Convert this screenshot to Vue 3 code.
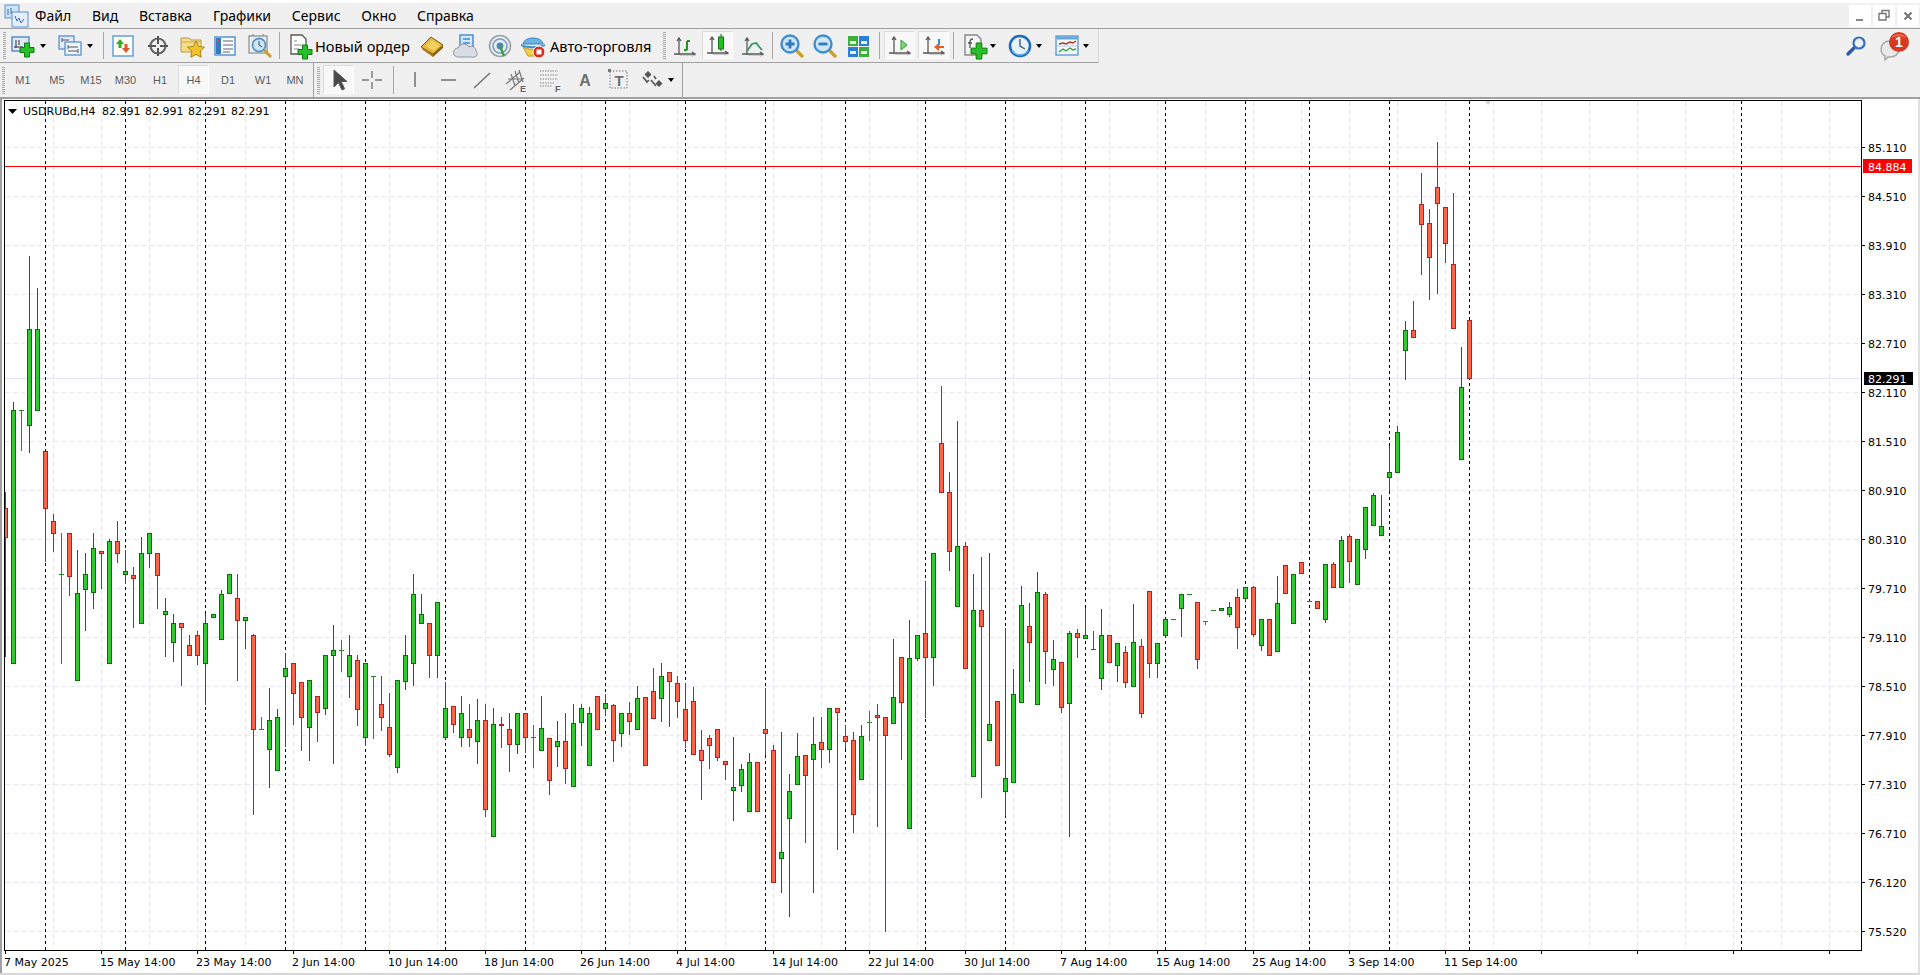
<script setup>
const plus = (x, y, a = 7, b = 2.5) =>
  `<path d="M${x - b} ${y - a}h${b * 2}v${a - b}h${a - b}v${b * 2}h${b - a}v${a - b}h${-b * 2}v${b - a}h${b - a}v${-b * 2}h${a - b}z" fill="#28c028" stroke="#0d7a0d"/>`
const axes = `<path d="M8 6V23M3 22H24M6 9l2-3 2 3M21 20l3 2-3 2" fill="none" stroke="#5a5a5a" stroke-width="1.3"/><path d="M9 23.5H25" stroke="#ccc"/>`
const lens = (mark) =>
  `<path d="M18 18l6 6" stroke="#c9a030" stroke-width="3.4" stroke-linecap="round"/><circle cx="12" cy="12" r="8.5" fill="#cfe6f8" stroke="#3f8fd0" stroke-width="2.4"/>${mark}`
const icons = {
  logo: `<rect x="2" y="1" width="14" height="13" fill="#cfe2f6" stroke="#5b8fd0"/><rect x="9" y="8" width="16" height="15" fill="#e4effa" stroke="#5b8fd0"/><path d="M5 5v6M8 4v6M12 12l2 5 2-3 2 5 3-4" stroke="#3a6eb0" fill="none"/>`,
  newchart: `<rect x="3" y="5" width="17" height="14" fill="#dfeafa" stroke="#4d86c2" stroke-width="1.4"/><path d="M7 8v8M5 15h9M10 8v5" stroke="#333" fill="none"/>${plus(18, 18)}`,
  profile: `<rect x="3" y="4" width="15" height="13" fill="#dfeafa" stroke="#5b8fc8" stroke-width="1.3"/><rect x="9" y="10" width="16" height="13" fill="#eef4fb" stroke="#5b8fc8" stroke-width="1.3"/><path d="M6 8h7M6 6v4M12 15h10M12 19h10M12 13v4M22 17v4" stroke="#555" fill="none"/>`,
  market: `<rect x="4" y="4" width="20" height="20" fill="#fffdf5" stroke="#6ba6dc" stroke-width="1.6"/><path d="M11 7l-4 5h2.5v4h3v-4H15z" fill="#2eae2e"/><path d="M17 21l4-5h-2.5v-4h-3v4H13z" fill="#e0552e"/>`,
  cross: `<circle cx="14" cy="14" r="7.5" fill="none" stroke="#666" stroke-width="2.2"/><path d="M14 4v8M14 16v8M4 14h8M16 14h8" stroke="#555" stroke-width="2"/>`,
  folder: `<path d="M3 6h8l2 2h10v12H3z" fill="#f6dd8a" stroke="#b89a40"/><path d="M3 10h20" stroke="#caa94c"/><path d="M18 9l2.6 5.4 5.9.8-4.3 4.1 1 5.9-5.2-2.8-5.2 2.8 1-5.9L9.5 15.2l5.9-.8z" fill="#f2c230" stroke="#a88818"/>`,
  list: `<rect x="4" y="5" width="20" height="18" fill="#f8fbff" stroke="#5e9cd8" stroke-width="1.6"/><rect x="5" y="6" width="5" height="16" fill="#3a78c0"/><path d="M12 9h10M12 13h10M12 17h10M12 20h7" stroke="#666"/><path d="M7 8v2" stroke="#e04830" stroke-width="2"/>`,
  magclock: `<rect x="3" y="4" width="18" height="17" fill="#eee" stroke="#999" stroke-width="1.4"/><path d="M7 4v-2M17 4v-2" stroke="#777"/><path d="M18 18l7 7" stroke="#c9a030" stroke-width="3"/><circle cx="13" cy="13" r="6.5" fill="#cfe6f8" stroke="#5a96cc" stroke-width="1.8"/><path d="M13 9v4l3 2" stroke="#345" fill="none"/>`,
  order: `<path d="M5 3h11l4 4v15H5z" fill="#fff" stroke="#555" stroke-width="1.3"/><path d="M8 9h3M8 13h8M8 17h5" stroke="#888"/>${plus(19, 20, 7, 2.5)}`,
  gold: `<path d="M3 15L13 5l12 8-10 9z" fill="#e6b640" stroke="#7a5a14"/><path d="M3 15l2 3 10 7v-3z" fill="#a87a1e"/><path d="M15 25l10-9v-3l-10 9z" fill="#8a6414"/><path d="M8 14l6-6 8 5-6 6z" fill="#f4d060"/>`,
  cloud: `<rect x="8" y="3" width="13" height="14" fill="#d6e8fb" stroke="#3f87d4" stroke-width="1.4"/><path d="M11 7h7M11 11h7" stroke="#3f87d4" stroke-width="1.4"/><path d="M6 25a4.5 4.5 0 0 1 0-9 6 6 0 0 1 11-1 4.5 4.5 0 0 1 7 4 3.5 3.5 0 0 1-1 6z" fill="#d8dde4" stroke="#8c97a4"/>`,
  radar: `<circle cx="14" cy="14" r="10.5" fill="#e9edf0" stroke="#9aa3aa" stroke-width="1.6"/><circle cx="14" cy="14" r="7" fill="none" stroke="#7a9ec0" stroke-width="1.6"/><circle cx="14" cy="14" r="3.4" fill="#4a86c0"/><path d="M14 14l4 10" stroke="#3aa03a" stroke-width="2.4"/>`,
  auto: `<path d="M4 12c1-8 19-8 20 0z" fill="#68b6e8" stroke="#3a80b8"/><path d="M2 12c6 3 18 3 24 0v2c-6 3-18 3-24 0z" fill="#3a90d0"/><path d="M4 15c6 3 14 3 18 1l-1 8H9z" fill="#f3cf48" stroke="#b99a28"/><circle cx="20" cy="20" r="6" fill="#d83020" stroke="#fff"/><rect x="17.5" y="17.5" width="5" height="5" fill="#fff"/>`,
  bars: `${axes}<path d="M16 18V9M13 18h3M16 9h3" stroke="#179a17" stroke-width="2" fill="none"/>`,
  candle: `${axes}<path d="M17 3v17" stroke="#333"/><rect x="14.5" y="6" width="5" height="12" fill="#22c022" stroke="#0d7a0d"/>`,
  line: `${axes}<path d="M8 19l5-7 4-1 6 7" stroke="#2d9a5e" stroke-width="1.8" fill="none"/>`,
  zin: lens(`<path d="M12 7.5v9M7.5 12h9" stroke="#2e78bc" stroke-width="2.8"/>`),
  zout: lens(`<path d="M7.5 12h9" stroke="#2e78bc" stroke-width="2.8"/>`),
  tile: `<rect x="3" y="4" width="10" height="10" fill="#3cae3c"/><rect x="14" y="4" width="10" height="10" fill="#2c7ed6"/><rect x="3" y="15" width="10" height="10" fill="#2c7ed6"/><rect x="14" y="15" width="10" height="10" fill="#3cae3c"/><path d="M5 9h6v3H5zM16 9h6v3h-6zM5 19h6v3H5zM16 19h6v3h-6z" fill="#e6f2e6"/>`,
  scroll: `${axes}<path d="M15 9l6 5-6 5z" fill="#7ad87a" stroke="#2aa02a"/>`,
  shift: `${axes}<path d="M14 16l5-4v3h5v2h-5v3z" fill="#ea5a20"/><path d="M19 8v6" stroke="#3a8ac8" stroke-width="2"/>`,
  addind: `<path d="M4 3h12l4 4v16H4z" fill="#f4f4f4" stroke="#888" stroke-width="1.4"/><path d="M9 16V10c0-2 1-3 3-3M7 11h4" stroke="#555" fill="none" stroke-width="1.3"/>${plus(18, 19, 8, 2.8)}`,
  clock: `<circle cx="14" cy="14" r="10" fill="#e8f2fa" stroke="#1a6cc0" stroke-width="2.6"/><path d="M14 7v7l5 3" stroke="#4a5a6a" fill="none" stroke-width="1.4"/><path d="M6 18a9 9 0 0 0 16 0" stroke="#6aaee8" fill="none" stroke-width="1.6"/>`,
  tmpl: `<rect x="3" y="4" width="22" height="19" fill="#f4f8fc" stroke="#5e9cd8" stroke-width="1.4"/><rect x="3.5" y="4.5" width="21" height="3" fill="#6aa6de"/><path d="M4 14h20" stroke="#b8cce0"/><path d="M6 12l4-1 3 1 4-2 3 1 3-2" stroke="#b03a20" fill="none" stroke-width="1.4"/><path d="M6 20l4-3 3 2 4-3 3 2 3-1" stroke="#3aa03a" fill="none" stroke-width="1.4"/>`,
  arrow: `<path d="M9 4v17l4.5-4.5 3.5 7.5 2.6-1.2-3.4-7.3H22z" fill="#4a4a4a" stroke="#555"/>`,
  thin: `<path d="M14 5v7M14 16v7M4 14h7M17 14h7" stroke="#777" stroke-width="1.4"/>`,
  vline: `<path d="M14 6v15" stroke="#777" stroke-width="1.6"/>`,
  hline: `<path d="M6 14h15" stroke="#777" stroke-width="1.6"/>`,
  trend: `<path d="M5 22L21 7" stroke="#777" stroke-width="1.6"/>`,
  chan: `<path d="M3 18L17 6M7 24L21 12M8 8l4 12M12 5l4 12M16 4l4 12M5 13h15" stroke="#777" stroke-width="1.2" fill="none"/><text x="17" y="26" font-family="Liberation Sans" font-size="9" font-weight="700" fill="#666">E</text>`,
  fibo: `<path d="M3 5h18M3 9h18M3 13h18M3 17h14M3 20h12" stroke="#888" stroke-dasharray="1.5 1" fill="none"/><text x="18" y="26" font-family="Liberation Sans" font-size="9" font-weight="700" fill="#666">F</text>`,
  atext: `<text x="14" y="20" text-anchor="middle" font-family="Liberation Sans" font-size="16" font-weight="700" fill="#707070">A</text>`,
  ttext: `<rect x="5" y="5" width="17" height="17" fill="none" stroke="#777" stroke-dasharray="1.5 1.5"/><rect x="3" y="3" width="3" height="3" fill="#777"/><text x="14" y="20" text-anchor="middle" font-family="Liberation Sans" font-size="15" font-weight="700" fill="#707070">T</text>`,
  marks: `<path d="M9 5l3.5 3.5L9 12 5.5 8.5zM20 14l3.5 3.5L20 21l-3.5-3.5z" fill="#555"/><path d="M4 11l4 5 2-2M12 14l5 6M15 10l2 3" stroke="#555" stroke-width="1.6" fill="none"/>`,
  search: `<path d="M12 16l-6 6" stroke="#2a5aa8" stroke-width="3.4" stroke-linecap="round"/><circle cx="17" cy="11" r="5.5" fill="#e8f2fc" stroke="#3a6cc0" stroke-width="2.2"/>`,
}

const I = (w, i, cls) => ({ w, i, cls })
const T = (w, t, cls) => ({ w, t, cls })
const S = (w) => ({ w })
const SEP = { w: 1, cls: 'sep' }
const DD = (w) => ({ w, cls: 'dd' })
const GRIP = (w) => ({ w, cls: 'grip' })

const row1 = [
  GRIP(8), I(30, 'newchart'), DD(9), S(8), I(30, 'profile'), DD(9), S(9), SEP,
  I(38, 'market'), I(32, 'cross'), I(36, 'folder'), I(30, 'list'), I(39, 'magclock'), SEP,
  S(5), I(30, 'order'), T(97, 'Новый ордер', 'txt'), I(40, 'gold'), I(28, 'cloud'), I(40, 'radar'), I(26, 'auto'),
  S(4), T(102, 'Авто-торговля', 'txt'), S(8), GRIP(8),
  I(34, 'bars'), I(31, 'candle', 'on'), I(39, 'line'), SEP,
  I(38, 'zin'), I(28, 'zout'), I(40, 'tile'), SEP, S(4), I(31, 'scroll', 'on'), S(3), I(31, 'shift', 'on'), S(4), SEP,
  S(7), I(28, 'addind'), DD(7), S(10), I(28, 'clock'), DD(10), S(9), I(28, 'tmpl'), DD(10),
]
const row2 = [
  GRIP(6), T(34, 'M1', 'tf'), T(34, 'M5', 'tf'), T(34, 'M15', 'tf'), T(35, 'M30', 'tf'), T(34, 'H1', 'tf'), S(1),
  T(31, 'H4', 'tf on'), S(1), T(36, 'D1', 'tf'), T(34, 'W1', 'tf'), T(30, 'MN', 'tf'), S(3),
]
const row2b = [
  GRIP(9), I(31, 'arrow', 'on'), I(36, 'thin'), S(3), SEP, I(42, 'vline'), I(26, 'hline'), I(42, 'trend'),
  I(26, 'chan'), I(42, 'fibo'), I(26, 'atext'), I(42, 'ttext'), I(26, 'marks'), DD(10),
]
const menu = ['Файл', 'Вид', 'Вставка', 'Графики', 'Сервис', 'Окно', 'Справка']

const prices = ['85.110', '84.510', '83.910', '83.310', '82.710', '82.110', '81.510', '80.910', '80.310', '79.710', '79.110', '78.510', '77.910', '77.310', '76.710', '76.120', '75.520']
const hGrid = prices.map((p, k) => ({ p, y: 147 + 49 * k }))
const vGrid = Array.from({ length: 38 }, (_, k) => 53 + 48 * k)
const seps = [45, 125, 205, 285, 365, 445, 525, 605, 685, 765, 845, 925, 1005, 1085, 1165, 1245, 1309, 1389, 1469, 1741]
const times = ['7 May 2025', '15 May 14:00', '23 May 14:00', '2 Jun 14:00', '10 Jun 14:00', '18 Jun 14:00', '26 Jun 14:00', '4 Jul 14:00', '14 Jul 14:00', '22 Jul 14:00', '30 Jul 14:00', '7 Aug 14:00', '15 Aug 14:00', '25 Aug 14:00', '3 Sep 14:00', '11 Sep 14:00']
const tickX = Array.from({ length: 20 }, (_, k) => 5 + 96 * k)

const raw = [
  ['r', 492, 508, 537, 656], ['g', 402, 410, 663, 663], ['d', 410, 410, 410, 450], ['g', 256, 329, 425, 452], ['g', 288, 329, 410, 410],
  ['r', 451, 451, 508, 561], ['r', 514, 521, 533, 551], ['d', 533, 574, 574, 663], ['r', 533, 533, 576, 595], ['g', 550, 593, 680, 680],
  ['g', 553, 574, 589, 630], ['g', 533, 548, 592, 608], ['r', 551, 551, 553, 588], ['g', 539, 541, 663, 663], ['r', 521, 541, 553, 562],
  ['g', 550, 571, 574, 583], ['r', 567, 575, 578, 627], ['g', 537, 553, 623, 623], ['g', 533, 533, 553, 567], ['r', 553, 553, 575, 608],
  ['g', 598, 611, 614, 656], ['g', 614, 623, 642, 661], ['r', 623, 623, 627, 685], ['r', 635, 645, 655, 655], ['r', 631, 635, 655, 664],
  ['g', 614, 623, 663, 704], ['g', 614, 614, 617, 617], ['g', 590, 594, 639, 639], ['g', 574, 574, 593, 593], ['r', 574, 598, 620, 680],
  ['g', 617, 617, 620, 648], ['r', 634, 635, 729, 814], ['d', 717, 729, 729, 729], ['g', 688, 720, 749, 787], ['g', 709, 717, 770, 770],
  ['g', 653, 668, 676, 746], ['r', 663, 663, 693, 724], ['r', 682, 682, 717, 750], ['g', 680, 680, 727, 760], ['r', 696, 696, 712, 741],
  ['g', 655, 655, 708, 714], ['g', 625, 650, 655, 763], ['d', 640, 650, 650, 671], ['g', 635, 655, 676, 697], ['r', 655, 660, 709, 725],
  ['g', 663, 663, 737, 745], ['d', 676, 676, 676, 738], ['r', 676, 704, 717, 730], ['r', 693, 727, 754, 756], ['g', 680, 680, 767, 772],
  ['g', 635, 655, 681, 689], ['g', 574, 594, 663, 685], ['g', 594, 614, 623, 623], ['r', 623, 623, 655, 677], ['g', 602, 602, 655, 677],
  ['g', 682, 708, 737, 738], ['r', 706, 706, 724, 732], ['g', 696, 713, 737, 746], ['r', 704, 729, 737, 746], ['g', 699, 720, 741, 763],
  ['r', 704, 720, 809, 816], ['g', 708, 724, 836, 836], ['r', 717, 724, 725, 747], ['r', 713, 729, 744, 771], ['g', 713, 713, 744, 753],
  ['r', 713, 713, 737, 752], ['d', 725, 737, 737, 767], ['g', 696, 728, 750, 750], ['r', 738, 738, 780, 794], ['g', 721, 741, 746, 766],
  ['r', 713, 741, 768, 783], ['g', 704, 723, 786, 786], ['g', 704, 708, 722, 745], ['g', 707, 713, 765, 765], ['r', 696, 696, 729, 729],
  ['g', 694, 703, 708, 715], ['r', 704, 705, 740, 761], ['g', 713, 713, 733, 746], ['r', 702, 713, 721, 734], ['g', 686, 698, 729, 729],
  ['r', 697, 697, 765, 765], ['r', 668, 691, 718, 718], ['g', 663, 676, 698, 721], ['r', 672, 672, 681, 726], ['r', 676, 683, 701, 717],
  ['r', 683, 709, 740, 747], ['r', 687, 701, 754, 754], ['r', 730, 750, 760, 799], ['r', 735, 738, 745, 768], ['r', 729, 729, 757, 760],
  ['r', 761, 761, 764, 779], ['g', 737, 787, 790, 820], ['g', 764, 769, 785, 791], ['g', 753, 762, 811, 811], ['r', 762, 762, 811, 811],
  ['r', 688, 729, 733, 754], ['r', 745, 750, 882, 882], ['g', 732, 852, 858, 892], ['g', 774, 791, 818, 916], ['g', 733, 756, 784, 784],
  ['r', 755, 755, 775, 842], ['g', 717, 744, 759, 892], ['r', 717, 742, 749, 767], ['g', 708, 708, 749, 762], ['r', 708, 708, 712, 849],
  ['r', 725, 736, 741, 748], ['r', 732, 740, 814, 832], ['g', 725, 736, 779, 779], ['d', 711, 722, 722, 740], ['r', 704, 715, 717, 826],
  ['r', 717, 717, 735, 931], ['g', 639, 697, 723, 723], ['r', 657, 657, 702, 759], ['g', 620, 658, 828, 828], ['g', 635, 635, 658, 660],
  ['r', 581, 633, 657, 717], ['g', 553, 553, 657, 685], ['r', 386, 443, 492, 492], ['r', 472, 492, 551, 570], ['g', 421, 546, 606, 606],
  ['r', 542, 546, 668, 668], ['g', 574, 610, 776, 776], ['r', 557, 610, 626, 797], ['g', 553, 724, 740, 740], ['r', 701, 701, 765, 765],
  ['g', 628, 778, 791, 815], ['g', 669, 694, 782, 782], ['g', 586, 605, 702, 702], ['r', 603, 626, 642, 681], ['g', 572, 592, 704, 704],
  ['r', 592, 594, 651, 683], ['g', 640, 659, 669, 685], ['r', 662, 662, 707, 712], ['g', 631, 633, 703, 836], ['r', 629, 633, 637, 657],
  ['g', 608, 635, 638, 638], ['R', 631, 649, 649, 649], ['g', 609, 635, 678, 689], ['r', 635, 635, 662, 662], ['g', 643, 643, 665, 681],
  ['r', 646, 652, 682, 687], ['g', 604, 642, 686, 686], ['r', 639, 646, 713, 717], ['r', 591, 591, 663, 677], ['g', 643, 643, 663, 677],
  ['g', 619, 619, 635, 636], ['d', 619, 619, 619, 619], ['g', 594, 594, 608, 636], ['d', 594, 594, 594, 594], ['r', 602, 602, 659, 668],
  ['d', 621, 621, 621, 624], ['d', 610, 610, 610, 610], ['g', 608, 608, 610, 610], ['g', 602, 607, 614, 616], ['r', 589, 597, 627, 648],
  ['g', 587, 587, 598, 600], ['r', 586, 587, 634, 636], ['g', 619, 619, 645, 650], ['r', 619, 619, 655, 655], ['g', 576, 603, 651, 651],
  ['r', 565, 565, 593, 593], ['g', 574, 574, 623, 623], ['r', 562, 562, 573, 573], ['d', 601, 601, 601, 601], ['r', 601, 601, 608, 608],
  ['g', 564, 564, 619, 622], ['r', 562, 564, 587, 587], ['g', 536, 540, 587, 587], ['r', 534, 536, 561, 582], ['g', 539, 539, 584, 584],
  ['g', 507, 507, 549, 558], ['g', 493, 495, 525, 525], ['g', 495, 526, 535, 535], ['g', 446, 472, 477, 490], ['g', 426, 432, 472, 472],
  ['g', 321, 330, 350, 379], ['r', 301, 330, 337, 337], ['r', 173, 204, 224, 274], ['r', 209, 223, 257, 299], ['r', 142, 187, 203, 293],
  ['r', 207, 207, 243, 262], ['r', 193, 264, 328, 328], ['g', 347, 387, 459, 459], ['r', 320, 320, 378, 378],
]
const STYLE = {
  g: { s: '#0a6f0a', f: '#2ecb2e' },
  r: { s: '#b22222', f: '#ff6347' },
  d: { s: '#1f8a1f', f: 'none' },
  R: { s: '#b22222', f: 'none' },
}
const candles = raw.map((c, i) => {
  const [k, wt, bt, bb, wb] = c
  return { x: 5 + 8 * i, wt, bt, bb, wb, s: STYLE[k].s, f: STYLE[k].f, flat: bb === bt }
})
</script>

<template>
  <div class="app">
    <div class="menubar">
      <svg class="logo" width="27" height="24" viewBox="0 0 27 24" v-html="icons.logo"></svg>
      <div v-for="m in menu" :key="m" class="menu">{{ m }}</div>
      <div class="winbtns">
        <div class="wb"><svg width="22" height="22" viewBox="0 0 22 22"><path d="M7 15h7" stroke="#8a8a8a" stroke-width="2" /></svg></div>
        <div class="wb"><svg width="22" height="22" viewBox="0 0 22 22"><path d="M9 8V5.5h7V12h-2.5M6 8.5h7V15H6z" fill="none" stroke="#777" stroke-width="1.4" /></svg></div>
        <div class="wb"><svg width="22" height="22" viewBox="0 0 22 22"><path d="M7.5 7.5l7 7M14.5 7.5l-7 7" stroke="#777" stroke-width="2.2" /></svg></div>
      </div>
    </div>

    <div class="row r1">
      <div class="bar bar1">
        <div v-for="(it, n) in row1" :key="n" class="it" :class="it.cls" :style="{ width: it.w + 'px' }">
          <template v-if="it.t">{{ it.t }}</template>
          <svg v-else-if="it.i" width="28" height="28" viewBox="0 0 28 28" v-html="icons[it.i]"></svg>
        </div>
      </div>
      <div class="tray">
        <svg width="28" height="28" viewBox="0 0 28 28" v-html="icons.search"></svg>
        <svg class="chat" width="40" height="32" viewBox="0 0 40 32">
          <path d="M3 18c0-5 4-8 9-8s9 3 9 8-4 8-9 8h-2l-3 3v-4c-2-1-4-4-4-7z" fill="#e8e8e8" stroke="#a8a8a8" stroke-width="1.4" />
          <circle cx="21" cy="11" r="10" fill="#d63a24" />
          <path d="M13 7a10 10 0 0 1 16 0c-4-2-12-2-16 0z" fill="#ea6a50" />
          <text x="21" y="16" text-anchor="middle" class="badge">1</text>
        </svg>
      </div>
    </div>

    <div class="row r2">
      <div class="bar bar2">
        <div v-for="(it, n) in row2" :key="n" class="it" :class="it.cls" :style="{ width: it.w + 'px' }">
          <template v-if="it.t">{{ it.t }}</template>
        </div>
      </div>
      <div class="bar bar3">
        <div v-for="(it, n) in row2b" :key="n" class="it" :class="it.cls" :style="{ width: it.w + 'px' }">
          <svg v-if="it.i" width="28" height="28" viewBox="0 0 28 28" v-html="icons[it.i]"></svg>
        </div>
      </div>
    </div>

    <svg class="chart" width="1920" height="876" viewBox="0 99 1920 876">
      <defs>
        <clipPath id="plotClip"><rect x="5" y="101" width="1856" height="849" /></clipPath>
      </defs>
      <rect x="0" y="99" width="1920" height="876" fill="#fff" />
      <g shape-rendering="crispEdges">
        <line v-for="v in vGrid" :key="'v' + v" :x1="v + 0.5" :x2="v + 0.5" y1="101" y2="950" class="grid" />
        <line v-for="h in hGrid" :key="'h' + h.y" x1="5" x2="1861" :y1="h.y + 0.5" :y2="h.y + 0.5" class="grid" />
        <line x1="5" x2="1861" y1="378.5" y2="378.5" stroke="#e4e4ff" />
      </g>
      <polygon points="8,109 17,109 12.5,114" fill="#000" />
      <text x="23" y="115" class="lab">USDRUBd,H4</text>
      <text x="102" y="115" class="lab">82.991</text>
      <text x="145" y="115" class="lab">82.991</text>
      <text x="188" y="115" class="lab">82.291</text>
      <text x="231" y="115" class="lab">82.291</text>
      <g shape-rendering="crispEdges">
        <line v-for="s in seps" :key="'s' + s" :x1="s + 0.5" :x2="s + 0.5" y1="101" y2="950" class="period" />
      </g>
      <g shape-rendering="crispEdges" clip-path="url(#plotClip)">
        <g v-for="c in candles" :key="c.x">
          <line :x1="c.x + 0.5" :x2="c.x + 0.5" :y1="c.wt" :y2="c.wb + 1" :stroke="c.s" />
          <line v-if="c.flat" :x1="c.x - 2" :x2="c.x + 3" :y1="c.bt + 0.5" :y2="c.bt + 0.5" :stroke="c.s" />
          <rect v-else :x="c.x - 1.5" :y="c.bt + 0.5" width="4" :height="c.bb - c.bt" :fill="c.f" :stroke="c.s" />
        </g>
        <line x1="5" x2="1861" y1="166.5" y2="166.5" stroke="#ff0000" />
      </g>
      <polygon points="1485,101 1491,101 1488,105" fill="#d0d0d0" />
      <g shape-rendering="crispEdges">
        <path d="M4.5 100.5H1861.5V950.5H4.5z" fill="none" stroke="#000" />
        <line v-for="h in hGrid" :key="'t' + h.y" x1="1861" x2="1865" :y1="h.y + 0.5" :y2="h.y + 0.5" stroke="#000" />
        <line v-for="t in tickX" :key="'x' + t" :x1="t + 0.5" :x2="t + 0.5" y1="950" y2="954" stroke="#000" />
        <rect x="0" y="99" width="2" height="876" fill="#a0a0a0" />
        <rect x="0" y="973" width="1920" height="2" fill="#d8d8d8" />
        <rect x="1918" y="99" width="2" height="876" fill="#e0e0e0" />
      </g>
      <text v-for="h in hGrid" :key="'p' + h.y" x="1868" :y="h.y + 5" class="lab">{{ h.p }}</text>
      <text v-for="(t, i) in times" :key="t" :x="4 + 96 * i" y="966" class="lab">{{ t }}</text>
      <rect x="1863" y="159" width="49" height="14" fill="#ff0000" />
      <text x="1868" y="171" class="lab white">84.884</text>
      <rect x="1864" y="372" width="49" height="13" fill="#000" />
      <text x="1868" y="383" class="lab white">82.291</text>
    </svg>
  </div>
</template>

<style>
html,
body {
  margin: 0;
  overflow: hidden;
}
</style>

<style scoped>
.app {
  width: 1920px;
  height: 975px;
  overflow: hidden;
  background: #f0f0f0;
  font-family: "Noto Sans", sans-serif;
  color: #000;
}
.menubar {
  height: 25px;
  border-top: 3px solid #fff;
  border-bottom: 1px solid #a0a0a0;
  display: flex;
  align-items: center;
  font-size: 14px;
}
.logo {
  flex: none;
  margin-left: 3px;
  margin-right: -5.4px;
}
.menu {
  padding: 0 10.4px;
}
.winbtns {
  margin-left: auto;
  display: flex;
  gap: 2px;
  padding-right: 1px;
}
.wb {
  width: 22px;
  height: 22px;
  background: #fff;
}
.row {
  display: flex;
}
.r1 {
  height: 34px;
}
.r2 {
  height: 34px;
  border-bottom: 2px solid #a0a0a0;
}
.bar {
  display: flex;
  flex: none;
  height: 100%;
  box-sizing: border-box;
}
.bar1 {
  width: 1099px;
  border-bottom: 1px solid #a0a0a0;
  border-right: 1px solid #d8d8d8;
}
.bar2 {
  width: 314px;
  border-right: 1px solid #a0a0a0;
}
.bar3 {
  width: 369px;
  border-right: 1px solid #a0a0a0;
}
.it {
  flex: none;
  display: flex;
  align-items: center;
  justify-content: center;
  box-sizing: border-box;
  position: relative;
}
.it svg {
  flex: none;
}
.txt {
  justify-content: flex-start;
  font-size: 14.6px;
  white-space: nowrap;
}
.tf {
  font-family: "Liberation Sans", sans-serif;
  font-size: 11px;
  color: #5c5c5c;
}
.on {
  background: #f8f8f8;
  border: 1px solid #dcdcdc;
  border-right-color: #fff;
  border-bottom-color: #fff;
  margin: 2px 0 3px;
}
.sep {
  background: #a8a8a8;
  margin: 3px 0;
}
.dd::after {
  content: "";
  border-left: 3.5px solid transparent;
  border-right: 3.5px solid transparent;
  border-top: 4px solid #000;
}
.grip::after {
  content: "";
  width: 3px;
  height: 27px;
  background: repeating-linear-gradient(#a8a8a8 0 1px, transparent 1px 2px);
}
.tray {
  flex: 1;
  display: flex;
  justify-content: flex-end;
  align-items: center;
  gap: 8px;
  padding-right: 2px;
  height: 34px;
}
.chat {
  margin-top: 2px;
}
.badge {
  font-family: "Liberation Sans", sans-serif;
  font-weight: 700;
  font-size: 14px;
  fill: #fff;
}
.chart {
  display: block;
}
.grid {
  stroke: #e8e8f4;
  stroke-dasharray: 5 3;
}
.period {
  stroke: #000;
  stroke-dasharray: 3 3;
}
.lab {
  font-family: "DejaVu Sans", sans-serif;
  font-size: 11px;
  fill: #000;
}
.white {
  fill: #fff;
}
</style>
